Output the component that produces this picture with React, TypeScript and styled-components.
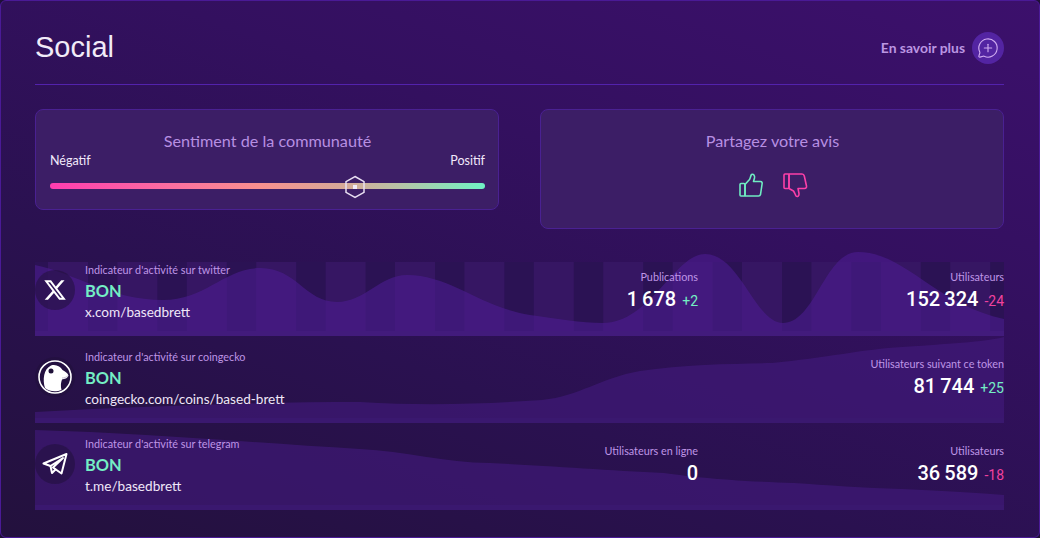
import React, { FC, ReactNode } from 'react';
import styled, { createGlobalStyle } from 'styled-components';
import { FaXTwitter } from 'react-icons/fa6';
import { MessageCirclePlus } from 'lucide-react';

const UI_FONT = `Lato, 'Noto Sans', sans-serif`;

const GlobalStyle = createGlobalStyle`
    html, body {
        margin: 0;
        padding: 0;
        background: #1f1038;
    }
    * {
        box-sizing: border-box;
    }
`;

const Page = styled.div`
    width: 1040px;
    height: 538px;
    padding: 0 35px 0 34px;
    overflow: hidden;
    border: 1px solid #4a1a96;
    border-radius: 6px;
    background: linear-gradient(200deg, #3c106c 0%, #33105f 35%, #2a1150 65%, #23113d 100%);
    font-family: ${UI_FONT};
    color: #fff;
`;

const Header = styled.header`
    height: 84px;
    padding-top: 30px;
    display: flex;
    justify-content: space-between;
    align-items: flex-start;
    border-bottom: 1px solid #5322ad;
`;

const Title = styled.h1`
    margin: 0;
    font-family: 'Liberation Sans', Arial, sans-serif;
    font-size: 29px;
    line-height: 32px;
    font-weight: 400;
    color: #f1ebf8;
`;

const MoreLink = styled.div`
    display: flex;
    align-items: center;
    gap: 7px;
    margin-top: 1px;
    font-size: 13.9px;
    font-weight: 700;
    color: #bb96e2;
`;

const MoreLabel = styled.span`
    margin-top: -2px;
`;

const MoreIcon = styled.span`
    width: 32px;
    height: 32px;
    border-radius: 50%;
    background: #5324a2;
    display: flex;
    align-items: center;
    justify-content: center;
    color: #cfaaf0;
`;

const Cards = styled.section`
    margin-top: 24px;
    display: grid;
    grid-template-columns: 464px 464px;
    justify-content: space-between;
    align-items: start;
`;

const Card = styled.div<{ $height: number }>`
    height: ${(p) => p.$height}px;
    padding: 22px 13px 0 14px;
    border: 1px solid #4a2192;
    border-radius: 8px;
    background: #3c1e66;
`;

const CardTitle = styled.h2`
    margin: 0;
    text-align: center;
    font-size: 16.2px;
    line-height: 18px;
    font-weight: 400;
    color: #b78fe2;
`;

const SliderLabels = styled.div`
    margin-top: 3px;
    display: flex;
    justify-content: space-between;
    font-size: 12.5px;
    line-height: 16px;
    color: #f2e9fb;
`;

const Track = styled.div`
    position: relative;
    margin-top: 14px;
    height: 6px;
    border-radius: 3px;
    background: linear-gradient(90deg, #ff3cb0 0%, #fb6f9f 28%, #f9908e 48%, #d5aa98 68%, #b9c3a6 80%, #6ff2c4 100%);
`;

const Thumb = styled.svg`
    position: absolute;
    top: -8px;
    width: 22px;
    height: 24px;
    margin-left: -11px;
`;

const Votes = styled.div`
    margin-top: 22px;
    display: flex;
    justify-content: center;
    gap: 18px;
`;

const Rows = styled.section`
    margin-top: 20px;
    display: flex;
    flex-direction: column;
`;

const RowBox = styled.article`
    position: relative;
    height: 87px;
    padding-top: 13px;
    display: flex;
    align-items: flex-start;
`;

const RowChart = styled.svg`
    position: absolute;
    inset: 0;
    width: 969px;
    height: 87px;
`;

const Identity = styled.div`
    position: relative;
    flex: 1;
    display: flex;
    align-items: flex-start;
    gap: 10px;
`;

const Badge = styled.span`
    flex: none;
    width: 40px;
    height: 40px;
    margin-top: 8px;
    border-radius: 50%;
    background: rgba(32, 16, 58, 0.55);
    display: flex;
    align-items: center;
    justify-content: center;
    color: #fff;
`;

const Info = styled.div`
    display: flex;
    flex-direction: column;
`;

const InfoLabel = styled.span`
    font-size: 10.8px;
    line-height: 16px;
    color: #bf95e6;
`;

const Rating = styled.span`
    margin-top: 1px;
    font-size: 16.4px;
    line-height: 23px;
    font-weight: 700;
    color: #74eec4;
`;

const SiteLink = styled.span`
    font-size: 13.6px;
    line-height: 20px;
    color: #efe6f8;
`;

const Stat = styled.div<{ $width: number }>`
    position: relative;
    width: ${(p) => p.$width}px;
    margin-top: 7px;
    display: flex;
    flex-direction: column;
    align-items: flex-end;
`;

const StatLabel = styled.span`
    font-size: 10.8px;
    line-height: 16px;
    color: #bf95e6;
`;

const StatValue = styled.div`
    margin-top: 2px;
    display: flex;
    align-items: baseline;
    gap: 6px;
    font-family: Roboto, sans-serif;
    font-size: 20px;
    line-height: 24px;
    font-weight: 500;
    color: #fff;
`;

const Delta = styled.span<{ $up: boolean }>`
    font-size: 14px;
    font-weight: 400;
    color: ${(p) => (p.$up ? '#74eec4' : '#f0429f')};
`;

const ThumbUp: FC = () => (
    <svg width="26" height="26" viewBox="0 0 26 26" fill="none" stroke="#6fecc2" strokeWidth="1.6" strokeLinejoin="round">
        <rect x="2" y="11.5" width="5" height="12.5" rx="1" />
        <path d="M7 12.5 L11.5 7.5 C12.5 6 12.5 4 13.5 2.5 C15.5 1.5 17 3.5 16.5 6 L15.5 9.5 L22.5 9.5 C24 9.5 24.5 11 24 12.5 L22.5 22.5 C22.2 23.6 21.5 24 20.5 24 L7 24 Z" />
    </svg>
);

const ThumbDown: FC = () => (
    <svg width="26" height="26" viewBox="0 0 26 26" fill="none" stroke="#fb3fa8" strokeWidth="1.6" strokeLinejoin="round">
        <rect x="2" y="2" width="5" height="14.5" rx="1" />
        <path d="M7 2 L20 2 C21.5 2 22 2.8 22.3 4 L24.5 14 C24.8 15.6 24 16.5 22.5 16.5 L16 16.5 L17 21.5 C17.4 23.8 15.5 25.2 14 24 C13 22 12.5 20.5 11.5 19 L7 16.5 Z" />
    </svg>
);

const TelegramIcon: FC = () => (
    <svg width="26" height="24" viewBox="0 0 26 24" fill="none" stroke="#fff" strokeWidth="2" strokeLinejoin="round" strokeLinecap="round">
        <path d="M24.5 2 L1.5 11.5 L8.5 14 L21 6 L11 15.5 L19.5 21.5 Z" />
        <path d="M8.5 14 L10 21 L13.5 17.5" />
    </svg>
);

const GeckoIcon: FC = () => (
    <svg width="36" height="36" viewBox="0 0 36 36">
        <circle cx="18" cy="18" r="16" fill="none" stroke="#fff" strokeWidth="1.6" />
        <path d="M8 29 C5.5 21 6.5 10 14 6.5 C19 5 23.5 7.5 25.5 11 C28.5 12.5 30.5 14 31.5 16.5 C30.5 19.5 27.5 20 25 20.5 C23.8 23.5 23.5 27.5 24.5 31 C19.5 33 12.5 33 8 29 Z" fill="#fff" />
        <circle cx="14" cy="12" r="2.5" fill="#1f1038" />
        <path d="M25 19 C27.5 19 29.5 18 31 16.8" fill="none" stroke="#b9b0c6" strokeWidth="0.8" />
    </svg>
);

const BAR_OFFSETS = Array.from({ length: 14 }, (_, i) => 13 + i * 69.4);

const CHARTS = {
    twitter:
        'M0 16 C40 24 75 51 128 51 C170 51 190 19 225 19 C262 19 270 53 302 53 C330 53 345 26 372 26 C415 26 445 58 495 66 C525 70 545 74 568 74 C615 74 640 5 670 5 C705 5 720 74 748 74 C780 74 790 3 823 3 C870 3 900 55 969 70 L969 87 L0 87 Z',
    coingecko:
        'M0 76 C120 70 230 66 325 66 C390 70 450 68 507 64 C545 60 565 42 605 35 C650 28 700 28 737 27 C790 22 830 13 867 11 C910 8 950 6 969 1 L969 87 L0 87 Z',
    telegram:
        'M0 7 C110 10 220 20 325 26 C370 28 410 40 455 40 C500 42 570 47 629 50 C650 53 690 58 759 60 C790 62 830 65 867 66 C910 68 945 70 969 72 L969 87 L0 87 Z',
};

type TChart = keyof typeof CHARTS;

const WaveChart: FC<{ kind: TChart }> = ({ kind }) => (
    <RowChart viewBox="0 0 969 87" preserveAspectRatio="none">
        {kind === 'twitter' && (
            <>
                <rect x="0" y="13" width="969" height="69" fill="#2b1254" />
                {BAR_OFFSETS.map((x) => (
                    <rect key={x} x={x} y="13" width="40" height="69" fill="#361663" />
                ))}
            </>
        )}
        <path d={CHARTS[kind]} fill={kind === 'twitter' ? 'rgba(78, 30, 150, 0.55)' : 'rgba(66, 26, 124, 0.62)'} />
        <rect x="0" y="82" width="969" height="5" fill={kind === 'twitter' ? '#421b7c' : '#3a186f'} />
    </RowChart>
);

type TStat = { label: string; value: string; delta?: string };

type TRow = {
    kind: TChart;
    icon: ReactNode;
    label: string;
    link: string;
    stats: { middle?: TStat; right: TStat };
};

const ROWS: TRow[] = [
    {
        kind: 'twitter',
        icon: <FaXTwitter size={24} />,
        label: "Indicateur d'activité sur twitter",
        link: 'x.com/basedbrett',
        stats: {
            middle: { label: 'Publications', value: '1\u2009678', delta: '+2' },
            right: { label: 'Utilisateurs', value: '152\u2009324', delta: '-24' },
        },
    },
    {
        kind: 'coingecko',
        icon: <GeckoIcon />,
        label: "Indicateur d'activité sur coingecko",
        link: 'coingecko.com/coins/based-brett',
        stats: {
            right: { label: 'Utilisateurs suivant ce token', value: '81\u2009744', delta: '+25' },
        },
    },
    {
        kind: 'telegram',
        icon: <TelegramIcon />,
        label: "Indicateur d'activité sur telegram",
        link: 't.me/basedbrett',
        stats: {
            middle: { label: 'Utilisateurs en ligne', value: '0' },
            right: { label: 'Utilisateurs', value: '36\u2009589', delta: '-18' },
        },
    },
];

const StatBlock: FC<{ stat?: TStat; width: number }> = ({ stat, width }) => (
    <Stat $width={width}>
        {stat && (
            <>
                <StatLabel>{stat.label}</StatLabel>
                <StatValue>
                    {stat.value}
                    {stat.delta && <Delta $up={stat.delta.startsWith('+')}>{stat.delta}</Delta>}
                </StatValue>
            </>
        )}
    </Stat>
);

const SENTIMENT = 70;

const App: FC = () => (
    <Page>
        <GlobalStyle />
        <Header>
            <Title>Social</Title>
            <MoreLink>
                <MoreLabel>En savoir plus</MoreLabel>
                <MoreIcon>
                    <MessageCirclePlus size={22} strokeWidth={1.25} />
                </MoreIcon>
            </MoreLink>
        </Header>
        <Cards>
            <Card $height={101}>
                <CardTitle>Sentiment de la communauté</CardTitle>
                <SliderLabels>
                    <span>Négatif</span>
                    <span>Positif</span>
                </SliderLabels>
                <Track>
                    <Thumb viewBox="0 0 22 24" style={{ left: `${SENTIMENT}%` }}>
                        <path d="M11 1.5 L20 6.7 L20 17.3 L11 22.5 L2 17.3 L2 6.7 Z" fill="none" stroke="#e8dff2" strokeWidth="1.5" />
                        <rect x="9" y="10" width="4" height="4" fill="#f1ebf8" />
                    </Thumb>
                </Track>
            </Card>
            <Card $height={120}>
                <CardTitle>Partagez votre avis</CardTitle>
                <Votes>
                    <ThumbUp />
                    <ThumbDown />
                </Votes>
            </Card>
        </Cards>
        <Rows>
            {ROWS.map((row) => (
                <RowBox key={row.kind}>
                    <WaveChart kind={row.kind} />
                    <Identity>
                        <Badge>{row.icon}</Badge>
                        <Info>
                            <InfoLabel>{row.label}</InfoLabel>
                            <Rating>BON</Rating>
                            <SiteLink>{row.link}</SiteLink>
                        </Info>
                    </Identity>
                    <StatBlock stat={row.stats.middle} width={200} />
                    <StatBlock stat={row.stats.right} width={306} />
                </RowBox>
            ))}
        </Rows>
    </Page>
);

export default App;
